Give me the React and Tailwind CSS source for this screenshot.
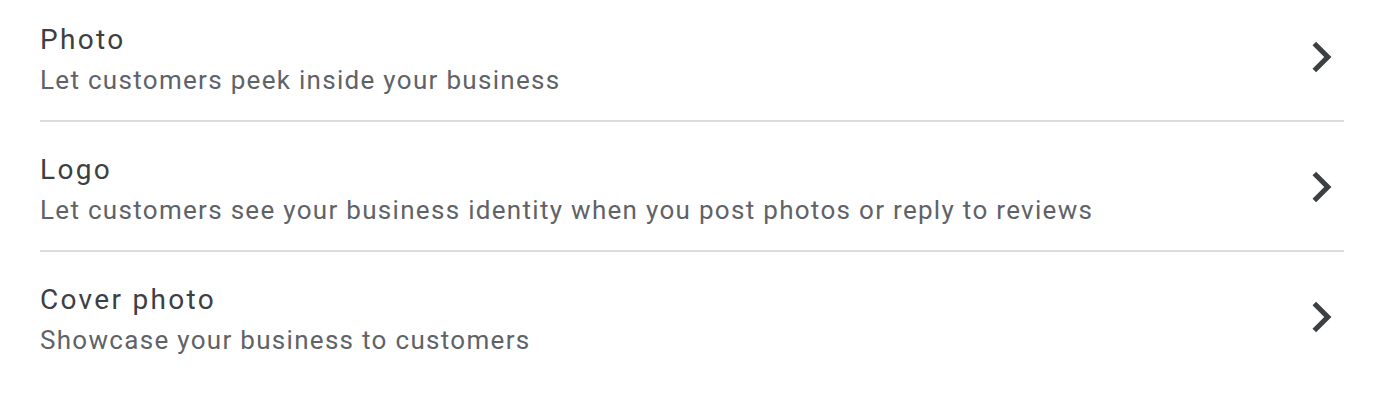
import React from "react";

const items = [
  { title: "Photo", subtitle: "Let customers peek inside your business" },
  {
    title: "Logo",
    subtitle:
      "Let customers see your business identity when you post photos or reply to reviews",
  },
  { title: "Cover photo", subtitle: "Showcase your business to customers" },
];

// chevron_right, recadré sur le tracé
const Chevron = () => (
  <svg width="23" height="36" viewBox="8 5 9 14" fill="#3c4043">
    <path d="M10 6L8.59 7.41 13.17 12l-4.58 4.59L10 18l6-6z" />
  </svg>
);

export default function App() {
  return (
    <div
      className="w-[1376px] h-[416px] bg-white pl-10"
      style={{ fontFamily: "Roboto, 'Noto Sans', sans-serif" }}
    >
      {items.map((item, i) => (
        <div
          key={item.title}
          className={
            i === 0
              ? "flex items-center w-[1304px] border-b-2 border-[#dadce0] pt-5 pb-5"
              : i === items.length - 1
              ? "flex items-center w-[1304px] pt-7 pb-5"
              : "flex items-center w-[1304px] border-b-2 border-[#dadce0] pt-7 pb-5"
          }
        >
          <div className="flex-1">
            <div className="text-[28px] leading-[40px] text-[#3c4043] tracking-[2.3px]">
              {item.title}
            </div>
            <div className="text-[26px] leading-[40px] text-[#5f6368] tracking-[1.3px]">
              {item.subtitle}
            </div>
          </div>
          <div className="mr-[10px] mb-[6px]">
            <Chevron />
          </div>
        </div>
      ))}
    </div>
  );
}
